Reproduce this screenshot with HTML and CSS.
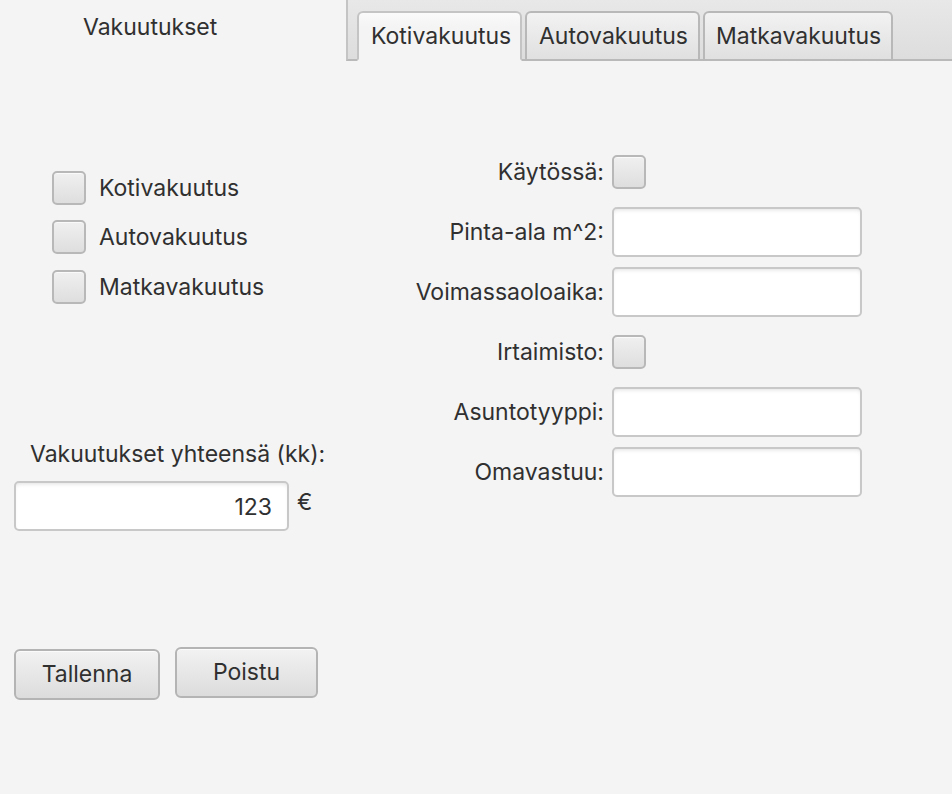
FILE: index.html
```html
<!DOCTYPE html>
<html lang="fi">
<head>
<meta charset="utf-8">
<title>Vakuutukset</title>
<link rel="stylesheet" href="styles.css">
</head>
<body>
<div class="app">
  <div class="left">
    <div class="title">Vakuutukset</div>
    <div class="checks">
      <label class="check-row"><span class="box"></span><span class="check-label">Kotivakuutus</span></label>
      <label class="check-row"><span class="box"></span><span class="check-label">Autovakuutus</span></label>
      <label class="check-row"><span class="box"></span><span class="check-label">Matkavakuutus</span></label>
    </div>
    <div class="total-label">Vakuutukset yhteensä (kk):</div>
    <div class="total-row">
      <div class="field total-field">123</div>
      <span class="euro">€</span>
    </div>
    <div class="buttons">
      <button class="btn btn-save">Tallenna</button>
      <button class="btn btn-delete">Poistu</button>
    </div>
  </div>
  <div class="tabpane">
    <div class="tab-header">
      <div class="tab tab-selected tab-koti">Kotivakuutus</div>
      <div class="tab tab-auto">Autovakuutus</div>
      <div class="tab tab-matka">Matkavakuutus</div>
    </div>
    <div class="form">
      <div class="form-label">Käytössä:</div>
      <div class="form-ctrl"><span class="box"></span></div>
      <div class="form-label">Pinta-ala m^2:</div>
      <div class="form-ctrl"><div class="field form-field"></div></div>
      <div class="form-label">Voimassaoloaika:</div>
      <div class="form-ctrl"><div class="field form-field"></div></div>
      <div class="form-label">Irtaimisto:</div>
      <div class="form-ctrl"><span class="box"></span></div>
      <div class="form-label">Asuntotyyppi:</div>
      <div class="form-ctrl"><div class="field form-field"></div></div>
      <div class="form-label">Omavastuu:</div>
      <div class="form-ctrl"><div class="field form-field"></div></div>
    </div>
  </div>
</div>
</body>
</html>
```

FILE: styles.css
```css
* { box-sizing: border-box; }
html, body {
  margin: 0;
  padding: 0;
  background: #f4f4f4;
}
body {
  font-family: Inter, "Open Sans", "Liberation Sans", sans-serif;
  font-size: 23px;
  color: #303030;
}
.app {
  display: flex;
  width: 952px;
  height: 794px;
  overflow: hidden;
}
.left {
  width: 346px;
  flex: none;
  display: flex;
  flex-direction: column;
}
.title {
  padding-left: 83px;
  height: 54px;
  line-height: 54px;
}
.checks {
  margin-top: 109px;
  padding-left: 52px;
  display: flex;
  flex-direction: column;
}
.check-row {
  display: flex;
  align-items: center;
  height: 49.5px;
}
.box {
  display: inline-block;
  width: 34px;
  height: 34px;
  border: 2px solid #b8b8b8;
  border-radius: 5px;
  background: linear-gradient(#f0f0f0, #dedede);
  box-shadow: inset 0 1px 0 #fafafa;
  flex: none;
}
.check-label {
  margin-left: 13px;
}
.total-label {
  margin-top: 126px;
  padding-left: 30px;
  height: 32px;
  line-height: 32px;
}
.total-row {
  margin-top: 11px;
  padding-left: 14px;
  display: flex;
  align-items: flex-start;
}
.field {
  background: #ffffff;
  border: 2px solid #c8c8c8;
  border-radius: 5px;
  box-shadow: inset 0 3px 4px -2px rgba(0, 0, 0, 0.12);
  height: 50px;
}
.total-field {
  width: 275px;
  text-align: right;
  padding-right: 15px;
  line-height: 48px;
}
.euro {
  margin-left: 8px;
  line-height: 42px;
}
.buttons {
  margin-top: 116px;
  padding-left: 14px;
  display: flex;
  align-items: flex-start;
}
.btn {
  font: inherit;
  color: #303030;
  height: 51px;
  border: 2px solid #b4b4b4;
  border-radius: 6px;
  background: linear-gradient(#f2f2f2, #dcdcdc);
  box-shadow: inset 0 1px 0 #fbfbfb;
  padding: 0;
}
.btn-save {
  width: 146px;
  margin-top: 2px;
}
.btn-delete {
  width: 143px;
  margin-left: 15px;
  line-height: 46px;
  padding-bottom: 2px;
}
.tabpane {
  flex: 1;
  display: flex;
  flex-direction: column;
}
.tab-header {
  height: 61px;
  background: linear-gradient(#e8e8e8, #dddddd);
  border-bottom: 2px solid #b9b9b9;
  border-left: 2px solid #c4c4c4;
  display: flex;
  align-items: flex-end;
  padding-left: 9px;
  gap: 3px;
}
.tab {
  height: 50px;
  margin-bottom: -2px;
  padding: 0 0 0 12px;
  border: 2px solid #b8b8b8;
  border-bottom: 2px solid #b9b9b9;
  border-radius: 6px 6px 0 0;
  background: linear-gradient(#f2f2f2, #e0e0e0);
  line-height: 46px;
  white-space: nowrap;
  overflow: hidden;
}
.tab-koti { width: 165px; }
.tab-auto { width: 175px; }
.tab-matka { width: 190px; padding-left: 11px; }
.tab-selected {
  background: linear-gradient(#fafafa, #f4f4f4 30%);
  border-color: #c4c4c4 #c4c4c4 #f4f4f4;
}
.form {
  margin-top: 81px;
  display: grid;
  grid-template-columns: 258px 250px;
  grid-auto-rows: 60px;
  column-gap: 8px;
  align-items: center;
}
.form-label {
  text-align: right;
  white-space: nowrap;
}
.form-ctrl {
  display: flex;
  align-items: center;
}
.form-field {
  width: 250px;
}
```
